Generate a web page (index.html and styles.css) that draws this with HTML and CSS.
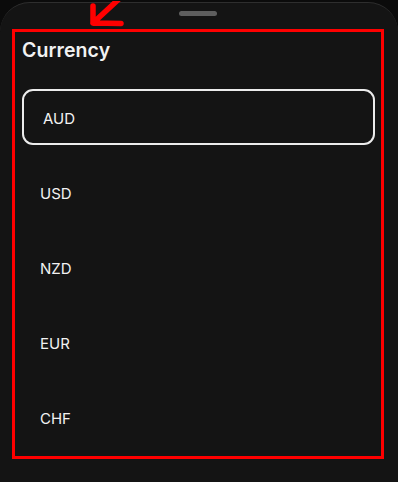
FILE: index.html
```html
<!DOCTYPE html>
<html lang="en">
<head>
  <meta charset="UTF-8" />
  <meta name="viewport" content="width=device-width, initial-scale=1.0"/>
  <title>Currency</title>
  <link rel="stylesheet" href="styles.css">
</head>
<body>
  <!-- bottom sheet -->
  <div class="sheet">
    <div class="handle"></div>

    <!-- annotation arrow -->
    <svg class="arrow" width="40" height="28" viewBox="0 0 40 28">
      <path d="M4 22 L31 -3 M4 22 L4 5 M4 22 L32 22.5" stroke="#ff0000" stroke-width="5.5" stroke-linecap="round" fill="none"/>
    </svg>

    <div class="highlight">
      <h2 class="title">Currency</h2>
      <ul class="options">
        <li class="option selected">AUD</li>
        <li class="option">USD</li>
        <li class="option">NZD</li>
        <li class="option">EUR</li>
        <li class="option">CHF</li>
      </ul>
    </div>
  </div>
</body>
</html>
```

FILE: styles.css
```css
* {
  margin: 0;
  padding: 0;
  box-sizing: border-box;
  font-family: Inter, 'Noto Sans', sans-serif;
}

body {
  background-color: #0b0b0b;
  color: #f2f2f2;
  height: 482px;
  overflow: hidden;
}

/* Sheet */
.sheet {
  position: relative;
  margin-top: 2px;
  height: 480px;
  background-color: #141414;
  border-top: 1px solid #2e2e2e;
  border-radius: 30px 30px 0 0;
  padding: 0 14px 0 12px;
}

.handle {
  width: 38px;
  height: 5px;
  margin: 8px auto 0;
  border-radius: 3px;
  background-color: #5e5e5e;
}

.arrow {
  position: absolute;
  left: 89px;
  top: -2px;
}

/* red annotation box */
.highlight {
  margin-top: 13px;
  height: 430px;
  border: 3px solid #ff0000;
  padding: 0 6px 0 7px;
}

.title {
  font-size: 19.5px;
  font-weight: 600;
  line-height: 24px;
  margin-top: 6px;
  letter-spacing: 0.1px;
}

.options {
  list-style: none;
  margin-top: 27px;
}

.option {
  height: 56px;
  display: flex;
  align-items: center;
  padding-top: 2px;
  font-size: 15px;
  border: 2px solid transparent;
  border-radius: 11px;
  margin-bottom: 19px;
}

.option.selected {
  border-color: #ececec;
  padding-left: 19px;
}

.option:not(.selected) {
  padding-left: 16px;
}
```
